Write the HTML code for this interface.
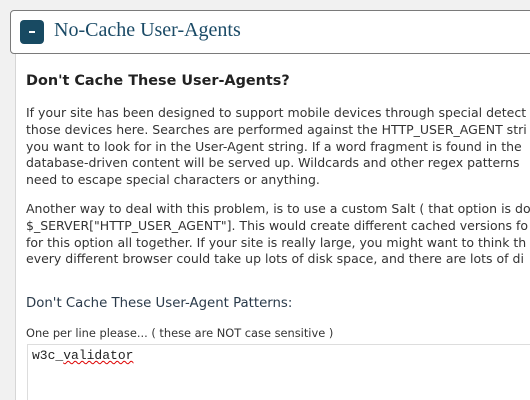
<!DOCTYPE html>
<html><head><meta charset="utf-8"><style>
html,body{margin:0;padding:0;width:530px;height:400px;overflow:hidden;background:#f1f1f1;}
body{position:relative;font-family:"DejaVu Sans",Verdana,sans-serif;}
#w{position:absolute;left:0;top:0;width:530px;height:400px;overflow:hidden;}
.hdr{position:absolute;left:10px;top:10px;width:530px;height:44px;background:#fff;border:1px solid #7a7a7a;border-radius:4px;box-sizing:border-box;}
.ico{position:absolute;left:20px;top:20px;width:24px;height:24px;background:#184a62;border-radius:4px;}
.ico:after{content:"";position:absolute;left:9px;top:11px;width:6px;height:2px;background:#fff;}
.ttl{position:absolute;left:54px;top:19px;font-family:"Liberation Serif","DejaVu Serif",serif;font-size:20px;color:#1a4a66;white-space:nowrap;}
.panel{position:absolute;left:15px;top:54px;width:515px;height:346px;background:#fff;border-left:1px solid #d6d6d6;}
.t{position:absolute;left:26px;white-space:nowrap;color:#333;}
h3{position:absolute;left:26px;top:73px;margin:0;font-size:14.4px;font-weight:bold;color:#222;white-space:nowrap;}
.p{font-size:12.5px;line-height:16.8px;color:#333;}
.ta{position:absolute;left:27px;top:344px;width:510px;height:60px;border:1px solid #ddd;background:#fff;}
.mono{position:absolute;left:32px;top:348px;font-family:"Liberation Mono","DejaVu Sans Mono",monospace;font-size:13px;color:#222;}
.sq{text-decoration:underline wavy #d00;text-decoration-thickness:1px;}
</style></head><body><div id="w">
<div class="hdr"></div>
<div class="ico"></div>
<div class="ttl">No-Cache User-Agents</div>
<div class="panel"></div>
<h3>Don't Cache These User-Agents?</h3>
<div class="t p" style="top:105px">If your site has been designed to support mobile devices through special detect<br>those devices here. Searches are performed against the HTTP_USER_AGENT stri<br>you want to look for in the User-Agent string. If a word fragment is found in the<br>database-driven content will be served up. Wildcards and other regex patterns<br>need to escape special characters or anything.</div>
<div class="t p" style="top:201px">Another way to deal with this problem, is to use a custom Salt ( that option is do<br>$_SERVER["HTTP_USER_AGENT"]. This would create different cached versions fo<br>for this option all together. If your site is really large, you might want to think th<br>every different browser could take up lots of disk space, and there are lots of di</div>
<div class="t" style="top:296px;font-size:13.3px;color:#2a3a4a">Don't Cache These User-Agent Patterns:</div>
<div class="t" style="top:326px;font-size:11.4px;color:#333">One per line please... ( these are NOT case sensitive )</div>
<div class="ta"></div>
<div class="mono">w3c_<span class="sq">validator</span></div>
</div></body></html>
